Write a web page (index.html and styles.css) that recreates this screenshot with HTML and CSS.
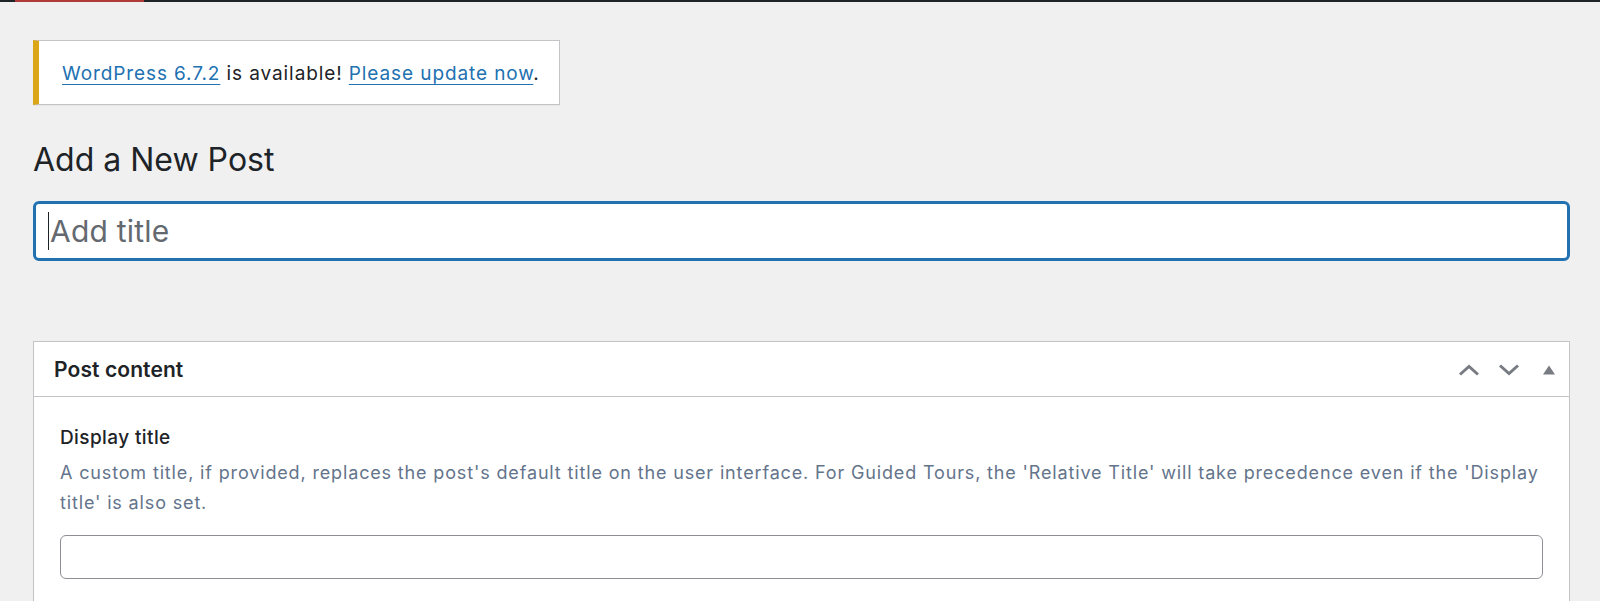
FILE: index.html
```html
<!DOCTYPE html>
<html lang="en">
<head>
<meta charset="utf-8">
<title>Add a New Post</title>
<link rel="stylesheet" href="styles.css">
</head>
<body>
<div class="adminbar"><span class="adminbar-active"></span></div>
<main class="wrap">
  <div class="update-nag">
    <a href="#">WordPress 6.7.2</a> is available! <a href="#">Please update now</a>.
  </div>
  <h1 class="page-title">Add a New Post</h1>
  <div class="title-field">
    <input class="title-input" type="text" placeholder="Add title">
    <span class="caret"></span>
  </div>
  <section class="postbox">
    <header class="postbox-header">
      <h2 class="postbox-title">Post content</h2>
      <div class="postbox-actions">
        <button class="handle" aria-label="Move up">
          <svg width="22" height="12" viewBox="0 0 22 12"><path d="M2 10.5 L11 2.5 L20 10.5" fill="none" stroke="#787c82" stroke-width="3"/></svg>
        </button>
        <button class="handle" aria-label="Move down">
          <svg width="22" height="12" viewBox="0 0 22 12"><path d="M2 1.5 L11 9.5 L20 1.5" fill="none" stroke="#787c82" stroke-width="3"/></svg>
        </button>
        <button class="handle" aria-label="Toggle panel">
          <svg width="12" height="10" viewBox="0 0 12 10"><path d="M6 0.5 L12 9.5 L0 9.5 Z" fill="#787c82"/></svg>
        </button>
      </div>
    </header>
    <div class="postbox-inside">
      <label class="field-label" for="display-title">Display title</label>
      <p class="field-desc">A custom title, if provided, replaces the post's default title on the user interface. For Guided Tours, the 'Relative Title' will take precedence even if the 'Display title' is also set.</p>
      <input id="display-title" class="field-input" type="text">
    </div>
  </section>
</main>
</body>
</html>
```
FILE: styles.css
```css
* { box-sizing: border-box; }
html, body { margin: 0; padding: 0; }
body {
  background: #f0f0f1;
  font-family: Inter, "Liberation Sans", sans-serif;
  color: #1d2327;
  height: 601px;
  overflow: hidden;
}
.adminbar {
  height: 2px;
  background: #1d2327;
  display: flex;
}
.adminbar-active {
  margin-left: 15px;
  width: 129px;
  background: #b0393a;
}
.wrap {
  padding: 0 30px 0 33px;
}
.update-nag {
  display: inline-block;
  margin-top: 38px;
  width: 527px;
  height: 65px;
  padding: 1px 0 0 23px;
  line-height: 63px;
  background: #fff;
  border: 1px solid #c3c4c7;
  border-left: 6px solid #dba617;
  box-shadow: 0 1px 1px rgba(0,0,0,.04);
  font-size: 19px;
  letter-spacing: 0.9px;
  color: #1d2327;
}
.update-nag a {
  color: #2271b1;
  text-decoration: underline;
  text-underline-offset: 4px;
  text-decoration-thickness: 1px;
}
.page-title {
  margin: 33px 0 0;
  font-size: 32px;
  font-weight: 400;
  line-height: 44px;
  color: #1d2327;
}
.title-field {
  position: relative;
  margin-top: 19px;
}
.title-input {
  display: block;
  width: 100%;
  height: 60px;
  border: 3px solid #2271b1;
  border-radius: 6px;
  background: #fff;
  padding: 0 0 0 14px;
  font-family: Inter, "Liberation Sans", sans-serif;
  font-size: 30px;
  letter-spacing: 0.2px;
  color: #1d2327;
  outline: none;
}
.title-input::placeholder { color: #646970; opacity: 1; }
.caret {
  position: absolute;
  left: 15px;
  top: 11px;
  width: 1px;
  height: 38px;
  background: #1d2327;
}
.postbox {
  margin-top: 80px;
  background: #fff;
  border: 1px solid #c3c4c7;
}
.postbox-header {
  display: flex;
  align-items: center;
  justify-content: space-between;
  height: 55px;
  border-bottom: 1px solid #c3c4c7;
  padding: 0 7px 0 20px;
}
.postbox-title {
  margin: 0;
  font-size: 21px;
  font-weight: 600;
  letter-spacing: 0.1px;
  color: #1d2327;
}
.postbox-actions {
  display: flex;
  align-items: center;
  gap: 14px;
  padding-top: 2px;
}
.handle {
  display: flex;
  align-items: center;
  justify-content: center;
  width: 26px;
  height: 30px;
  padding: 0;
  border: 0;
  background: none;
}
.postbox-inside {
  padding: 28px 26px 30px 26px;
}
.field-label {
  display: block;
  font-size: 19px;
  font-weight: 500;
  line-height: 26px;
  letter-spacing: 0.4px;
  color: #1d2327;
}
.field-desc {
  margin: 7px 0 17px;
  font-size: 18px;
  line-height: 30px;
  letter-spacing: 0.85px;
  color: #64748b;
}
.field-input {
  display: block;
  width: 100%;
  height: 44px;
  border: 1px solid #8c8f94;
  border-radius: 6px;
  background: #fff;
}
```
